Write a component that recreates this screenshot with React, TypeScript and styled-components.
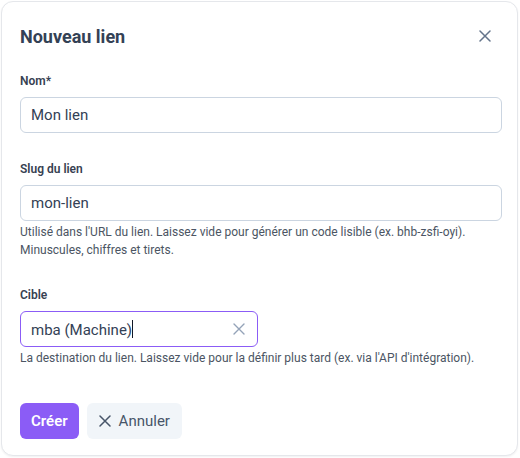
import styled, { createGlobalStyle } from 'styled-components';

const GlobalStyle = createGlobalStyle`
  * { box-sizing: border-box; }
  body {
    margin: 0;
    background: #ffffff;
    font-family: Roboto, 'Noto Sans', sans-serif;
  }
`;

const Page = styled.div`
  padding: 1px 2px 2px 1px;
`;

const Card = styled.div`
  background: #fff;
  border: 1px solid #e5e7eb;
  border-radius: 12px;
  box-shadow: 0 1px 2px rgba(15, 23, 42, 0.06);
  padding: 20px 15px 16px 18px;
`;

const Header = styled.div`
  display: flex;
  align-items: center;
  justify-content: space-between;
  height: 28px;
  margin-bottom: 23px;
`;

const Title = styled.h2`
  margin: 0;
  font-size: 18px;
  font-weight: 700;
  color: #334155;
`;

const CloseButton = styled.button`
  border: none;
  background: none;
  padding: 0;
  width: 24px;
  height: 24px;
  margin-right: 5px;
  display: flex;
  align-items: center;
  justify-content: center;
  color: #64748b;
  cursor: pointer;
`;

const Field = styled.div<{ $gap?: number }>`
  display: flex;
  flex-direction: column;
  margin-bottom: ${(p) => p.$gap ?? 28}px;
`;

const Label = styled.label`
  font-size: 12px;
  font-weight: 600;
  line-height: 16px;
  color: #374151;
  margin-bottom: 8px;
`;

const InputBox = styled.div<{ $focused?: boolean; $width?: string }>`
  display: flex;
  align-items: center;
  height: 36px;
  width: ${(p) => p.$width ?? '100%'};
  border: 1px solid ${(p) => (p.$focused ? '#8b5cf6' : '#cbd5e1')};
  border-radius: 6px;
  padding: 0 10px 0 10px;
  background: #fff;
`;

const InputText = styled.span`
  flex: 1;
  font-size: 15px;
  color: #334155;
  white-space: nowrap;
`;

const Caret = styled.span`
  display: inline-block;
  width: 1px;
  height: 18px;
  background: #111827;
  vertical-align: -3px;
`;

const ClearIcon = styled.span`
  display: flex;
  color: #94a3b8;
  margin-right: 2px;
`;

const Help = styled.p`
  margin: 2px 0 0;
  font-size: 12px;
  line-height: 18px;
  color: #4b5563;
`;

const Actions = styled.div`
  display: flex;
  gap: 8px;
  margin-top: 36px;
`;

const Button = styled.button<{ $primary?: boolean }>`
  display: flex;
  align-items: center;
  gap: 8px;
  height: 36px;
  padding: 0 ${(p) => (p.$primary ? 11 : 12)}px;
  border: none;
  border-radius: 6px;
  font-family: inherit;
  font-size: 15px;
  font-weight: ${(p) => (p.$primary ? 600 : 400)};
  background: ${(p) => (p.$primary ? '#8b5cf6' : '#f1f5f9')};
  color: ${(p) => (p.$primary ? '#ffffff' : '#475569')};
  cursor: pointer;
`;

const XIcon = ({ size = 12, stroke = 1.5 }: { size?: number; stroke?: number }) => (
  <svg width={size} height={size} viewBox="0 0 12 12" fill="none" stroke="currentColor" strokeWidth={stroke} strokeLinecap="round">
    <path d="M1 1l10 10M11 1L1 11" />
  </svg>
);

export default function App() {
  return (
    <Page>
      <GlobalStyle />
      <Card>
        <Header>
          <Title>Nouveau lien</Title>
          <CloseButton aria-label="Fermer">
            <XIcon size={12} />
          </CloseButton>
        </Header>

        <Field>
          <Label>Nom*</Label>
          <InputBox>
            <InputText>Mon lien</InputText>
          </InputBox>
        </Field>

        <Field>
          <Label>Slug du lien</Label>
          <InputBox>
            <InputText>mon-lien</InputText>
          </InputBox>
          <Help>
            Utilisé dans l'URL du lien. Laissez vide pour générer un code lisible (ex. bhb-zsfi-oyi).
            <br />
            Minuscules, chiffres et tirets.
          </Help>
        </Field>

        <Field $gap={0}>
          <Label>Cible</Label>
          <InputBox $focused $width="238px">
            <InputText>
              mba (Machine)
              <Caret />
            </InputText>
            <ClearIcon>
              <XIcon size={12} stroke={1.4} />
            </ClearIcon>
          </InputBox>
          <Help>La destination du lien. Laissez vide pour la définir plus tard (ex. via l'API d'intégration).</Help>
        </Field>

        <Actions>
          <Button $primary>Créer</Button>
          <Button>
            <XIcon size={12} stroke={1.5} />
            Annuler
          </Button>
        </Actions>
      </Card>
    </Page>
  );
}
